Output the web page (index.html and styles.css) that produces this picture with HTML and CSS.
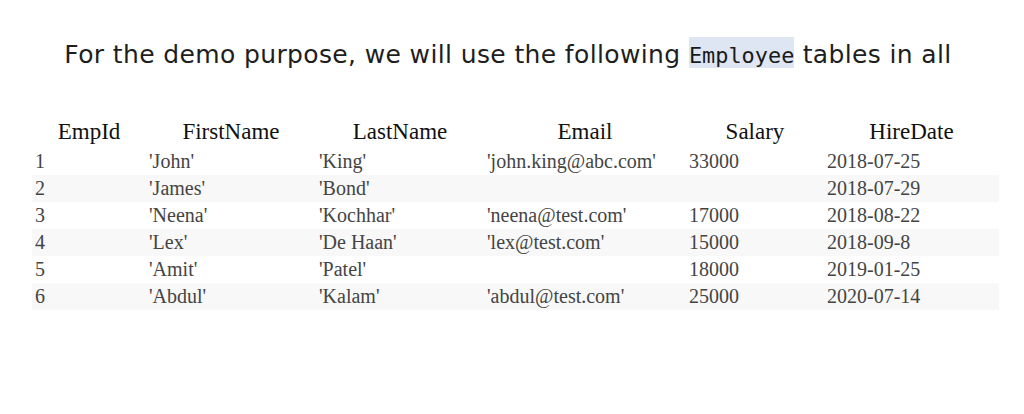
FILE: index.html
```html
<!DOCTYPE html>
<html>
<head>
<meta charset="utf-8">
<link rel="stylesheet" href="styles.css">
</head>
<body>
<div class="page">
  <p class="intro">For the demo purpose, we will use the following <code class="code">Employee</code> tables in all</p>
  <table class="emp">
    <thead>
      <tr>
        <th class="c1">EmpId</th>
        <th class="c2">FirstName</th>
        <th class="c3">LastName</th>
        <th class="c4">Email</th>
        <th class="c5">Salary</th>
        <th class="c6">HireDate</th>
      </tr>
    </thead>
    <tbody>
      <tr><td>1</td><td>'John'</td><td>'King'</td><td>'john.king@abc.com'</td><td>33000</td><td>2018-07-25</td></tr>
      <tr><td>2</td><td>'James'</td><td>'Bond'</td><td></td><td></td><td>2018-07-29</td></tr>
      <tr><td>3</td><td>'Neena'</td><td>'Kochhar'</td><td>'neena@test.com'</td><td>17000</td><td>2018-08-22</td></tr>
      <tr><td>4</td><td>'Lex'</td><td>'De Haan'</td><td>'lex@test.com'</td><td>15000</td><td>2018-09-8</td></tr>
      <tr><td>5</td><td>'Amit'</td><td>'Patel'</td><td></td><td>18000</td><td>2019-01-25</td></tr>
      <tr><td>6</td><td>'Abdul'</td><td>'Kalam'</td><td>'abdul@test.com'</td><td>25000</td><td>2020-07-14</td></tr>
    </tbody>
  </table>
</div>
</body>
</html>
```

FILE: styles.css
```css
html, body {
  margin: 0;
  padding: 0;
  background: #ffffff;
}

.page {
  width: 1024px;
  height: 414px;
  padding: 0 25px 0 32px;
  box-sizing: border-box;
}

.intro {
  margin: 0 0 0 -32px;
  width: 1024px;
  padding-top: 39px;
  padding-right: 8px;
  box-sizing: border-box;
  text-align: center;
  font-family: "DejaVu Sans", sans-serif;
  font-size: 25px;
  letter-spacing: 0.37px;
  line-height: 31px;
  color: #1e1e1e;
  white-space: nowrap;
}

.code {
  font-family: "DejaVu Sans Mono", monospace;
  font-size: 21.9px;
  letter-spacing: 0;
  background: #dde6f2;
  color: #1a1a1a;
  padding: 6px 0 0;
}

.emp {
  margin-top: 45px;
  width: 967px;
  border-collapse: collapse;
  font-family: "Liberation Serif", "Times New Roman", serif;
}

.emp th {
  font-weight: normal;
  font-size: 23px;
  color: #111111;
  text-align: center;
  height: 32px;
  padding: 0;
  vertical-align: middle;
}

.emp td {
  font-size: 20px;
  color: #444444;
  height: 27px;
  padding: 0 0 0 3px;
  text-align: left;
  vertical-align: middle;
  white-space: nowrap;
}

.emp tbody tr:nth-child(even) td {
  background: #f8f8f8;
}

.c1 { width: 114px; }
.c2 { width: 170px; }
.c3 { width: 168px; }
.c4 { width: 202px; }
.c5 { width: 138px; }
.c6 { width: 175px; }
```
